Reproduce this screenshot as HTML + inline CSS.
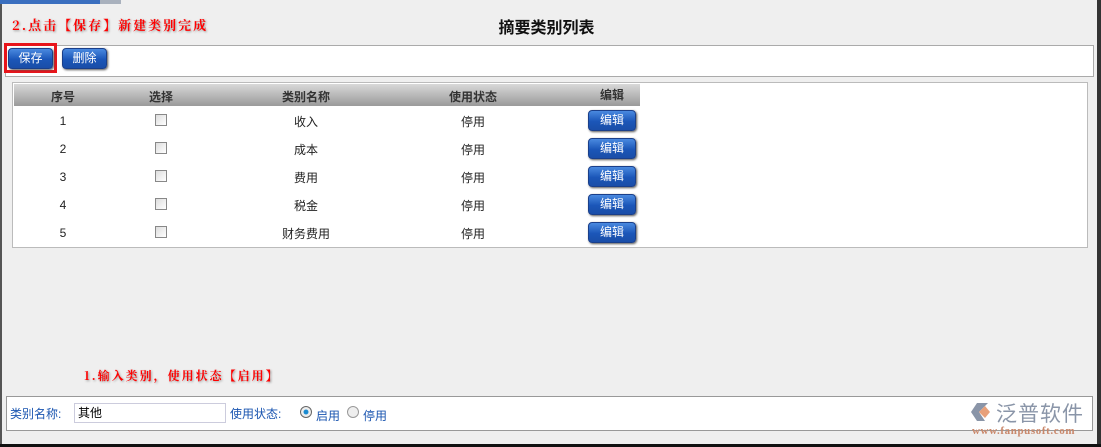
<!DOCTYPE html>
<html><head><meta charset="utf-8"><style>
*{margin:0;padding:0;box-sizing:border-box}
body{width:1101px;height:447px;background:#efefef;position:relative;overflow:hidden;font-family:"Liberation Sans","Noto Sans CJK SC",sans-serif;font-size:12px;color:#222}
.a{position:absolute}
.btn{position:absolute;height:21px;border-radius:4px;background:linear-gradient(#4a8ae0,#1b56b8 55%,#1a4ea8);color:#fff;font-size:12px;text-align:center;line-height:19px;box-shadow:1px 1px 2px #555;border:1px solid #1a3f8a}
.red{color:#f00;font-weight:bold;font-family:"Noto Serif CJK SC",serif;letter-spacing:2px;text-shadow:1px 1px 2px #999}
.cell{position:absolute;text-align:center;font-size:12px}
.cb{position:absolute;width:12px;height:12px;border:1px solid #888;background:linear-gradient(135deg,#ddd,#fff)}
</style></head><body>
<div class="a" style="left:0;top:0;width:2px;height:447px;background:#555"></div>
<div class="a" style="right:0;top:0;width:4px;height:447px;background:#333"></div>
<div class="a" style="left:0;bottom:0;width:1101px;height:3px;background:#111"></div>
<div class="a" style="left:0;top:0;width:100px;height:4px;background:#3a6fbf"></div>
<div class="a" style="left:100px;top:0;width:21px;height:4px;background:#a9b1bd"></div>
<div class="a red" style="left:12px;top:15px;font-size:13px">2.点击【保存】新建类别完成</div>
<div class="a" style="left:-4px;top:14px;width:1101px;text-align:center;font-size:16px;font-weight:bold;color:#111">摘要类别列表</div>
<div class="a" style="left:5px;top:45px;width:1089px;height:32px;background:#fff;border:1px solid #aaa"></div>
<div class="a" style="left:4px;top:43px;width:53px;height:30px;border:3px solid #e8141a"></div>
<div class="btn" style="left:8px;top:48px;width:45px">保存</div>
<div class="btn" style="left:62px;top:48px;width:45px">删除</div>
<div class="a" style="left:12px;top:82px;width:1076px;height:166px;background:#fff;border:1px solid #bbb"></div>
<div class="a" style="left:14px;top:84px;width:626px;height:22px;background:linear-gradient(#d8d8d8,#9a9a9a)"></div>
<div class="cell" style="left:23px;top:88px;width:80px;font-weight:bold;color:#333">序号</div>
<div class="cell" style="left:121px;top:88px;width:80px;font-weight:bold;color:#333">选择</div>
<div class="cell" style="left:256px;top:88px;width:100px;font-weight:bold;color:#333">类别名称</div>
<div class="cell" style="left:423px;top:88px;width:100px;font-weight:bold;color:#333">使用状态</div>
<div class="cell" style="left:572px;top:86px;width:80px;font-weight:bold;color:#333">编辑</div>
<div class="cell" style="left:23px;top:114px;width:80px">1</div><div class="cb" style="left:155px;top:114px"></div><div class="cell" style="left:256px;top:113px;width:100px">收入</div><div class="cell" style="left:423px;top:113px;width:100px">停用</div><div class="btn" style="left:588px;top:110px;width:48px">编辑</div>
<div class="cell" style="left:23px;top:142px;width:80px">2</div><div class="cb" style="left:155px;top:142px"></div><div class="cell" style="left:256px;top:141px;width:100px">成本</div><div class="cell" style="left:423px;top:141px;width:100px">停用</div><div class="btn" style="left:588px;top:138px;width:48px">编辑</div>
<div class="cell" style="left:23px;top:170px;width:80px">3</div><div class="cb" style="left:155px;top:170px"></div><div class="cell" style="left:256px;top:169px;width:100px">费用</div><div class="cell" style="left:423px;top:169px;width:100px">停用</div><div class="btn" style="left:588px;top:166px;width:48px">编辑</div>
<div class="cell" style="left:23px;top:198px;width:80px">4</div><div class="cb" style="left:155px;top:198px"></div><div class="cell" style="left:256px;top:197px;width:100px">税金</div><div class="cell" style="left:423px;top:197px;width:100px">停用</div><div class="btn" style="left:588px;top:194px;width:48px">编辑</div>
<div class="cell" style="left:23px;top:226px;width:80px">5</div><div class="cb" style="left:155px;top:226px"></div><div class="cell" style="left:256px;top:225px;width:100px">财务费用</div><div class="cell" style="left:423px;top:225px;width:100px">停用</div><div class="btn" style="left:588px;top:222px;width:48px">编辑</div>
<div class="a red" style="left:84px;top:367px;font-size:12px">1.输入类别，使用状态【启用】</div>
<div class="a" style="left:6px;top:396px;width:1087px;height:35px;background:#fff;border:1px solid #999"></div>
<div class="a" style="left:10px;top:405px;color:#1a55b0">类别名称:</div>
<div class="a" style="left:74px;top:403px;width:152px;height:20px;border:1px solid #ccd;padding-left:3px;line-height:18px;color:#000">其他</div>
<div class="a" style="left:230px;top:405px;color:#1a55b0">使用状态:</div>
<div class="a" style="left:300px;top:406px;width:12px;height:12px;border-radius:50%;border:1px solid #666;background:radial-gradient(#1a8ad0 30%,#eee 40%)"></div>
<div class="a" style="left:316px;top:407px;color:#1a55b0">启用</div>
<div class="a" style="left:347px;top:406px;width:12px;height:12px;border-radius:50%;border:1px solid #999;background:#eee"></div>
<div class="a" style="left:363px;top:407px;color:#1a55b0">停用</div>
<svg class="a" style="left:970px;top:401px" width="24" height="22" viewBox="0 0 24 22"><path d="M7 2h11l-9 9 6 9H7L1 11z" fill="#8a95a8"/><path d="M9 11l6-6 5 6-5 6z" fill="#e8a07a"/></svg>
<div class="a" style="left:996px;top:398px;font-size:21px;color:#8a95a8;letter-spacing:1px">泛普软件</div>
<div class="a" style="left:972px;top:425px;font-size:11px;color:#c9876a;font-family:'Liberation Serif',serif;font-weight:bold;letter-spacing:0.6px">www.fanpusoft.com</div>
</body></html>
